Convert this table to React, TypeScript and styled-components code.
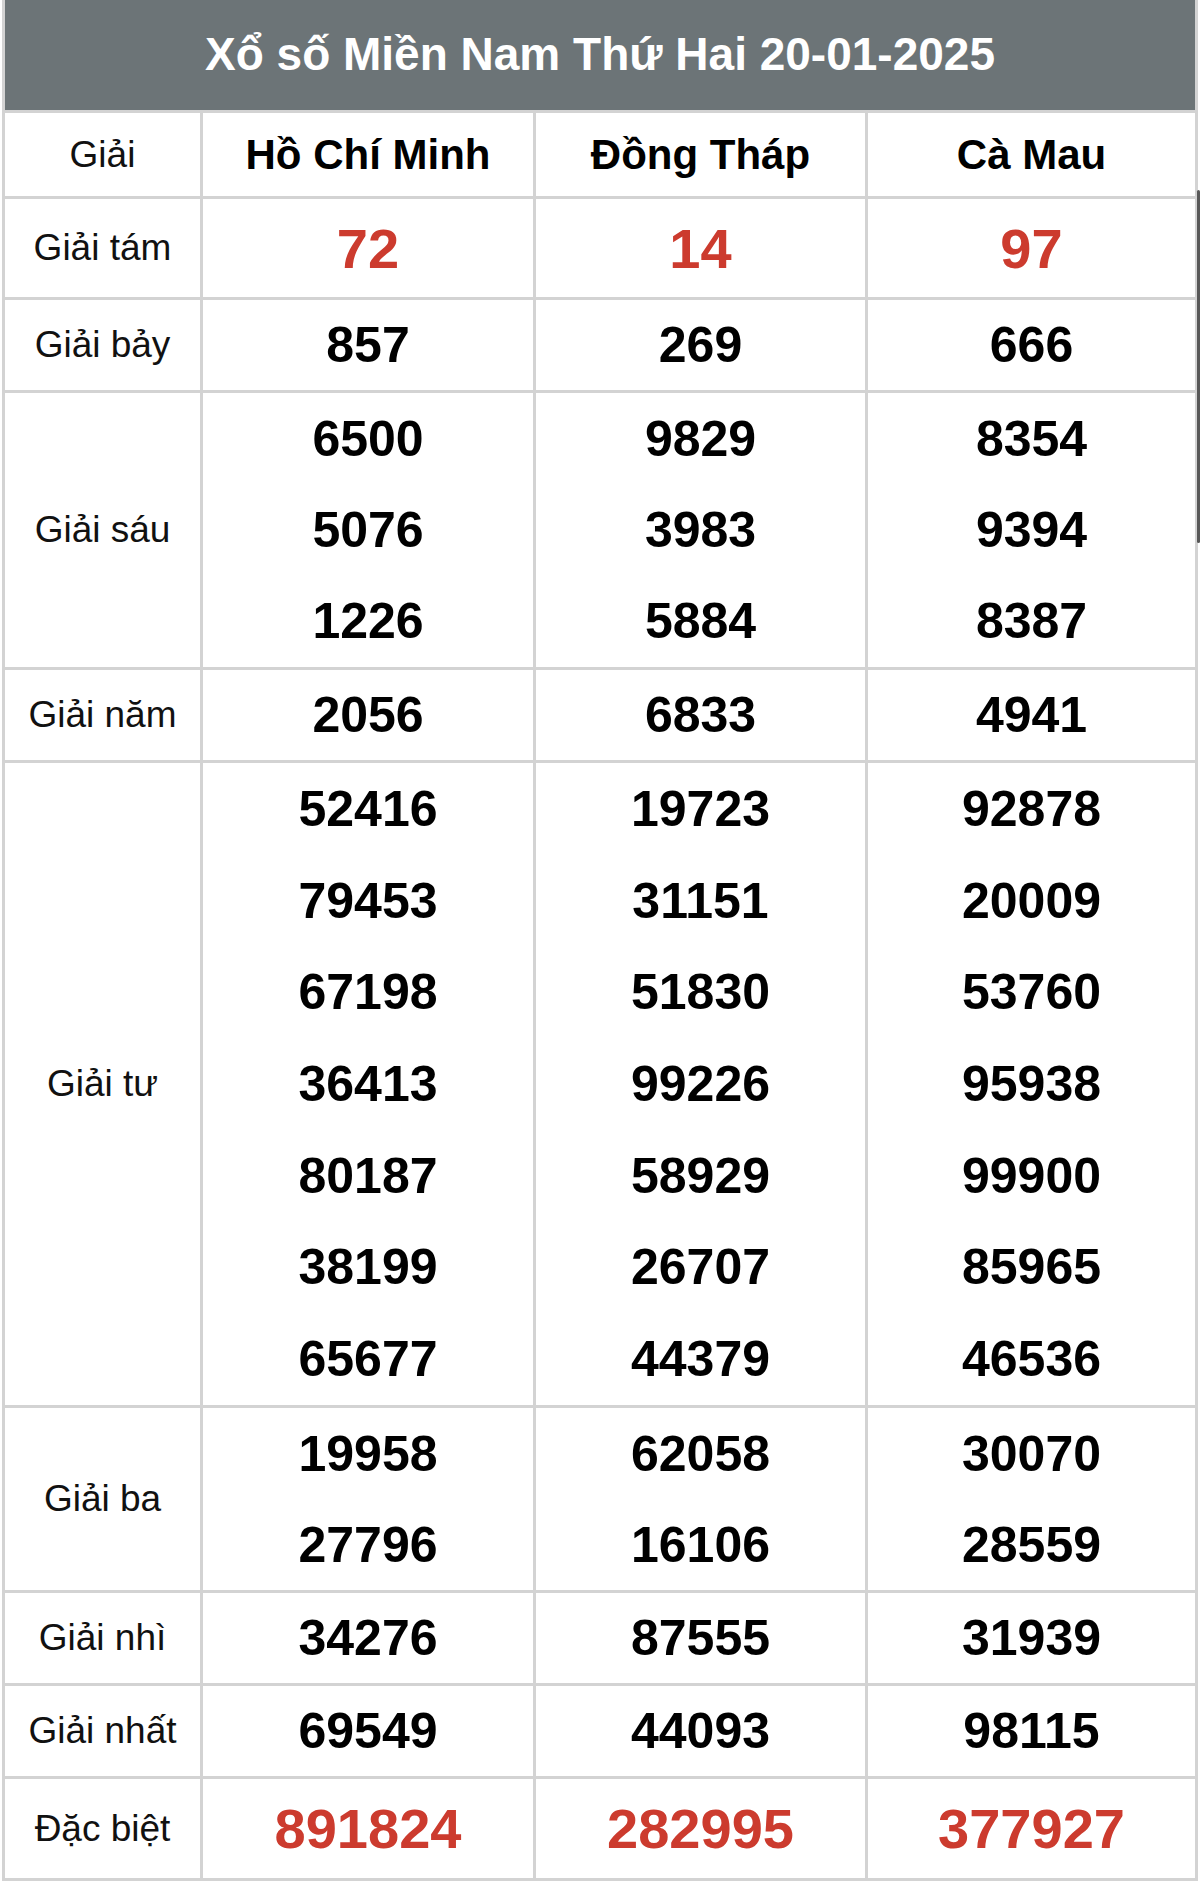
import React, { FC } from "react";
import styled, { createGlobalStyle } from "styled-components";

type PrizeRow = {
  label: string;
  height: number;
  highlight?: boolean;
  values: string[][];
};

const cities = ["Hồ Chí Minh", "Đồng Tháp", "Cà Mau"];

const rows: PrizeRow[] = [
  { label: "Giải tám", height: 98, highlight: true, values: [["72"], ["14"], ["97"]] },
  { label: "Giải bảy", height: 90, values: [["857"], ["269"], ["666"]] },
  {
    label: "Giải sáu",
    height: 274,
    values: [
      ["6500", "5076", "1226"],
      ["9829", "3983", "5884"],
      ["8354", "9394", "8387"],
    ],
  },
  { label: "Giải năm", height: 90, values: [["2056"], ["6833"], ["4941"]] },
  {
    label: "Giải tư",
    height: 642,
    values: [
      ["52416", "79453", "67198", "36413", "80187", "38199", "65677"],
      ["19723", "31151", "51830", "99226", "58929", "26707", "44379"],
      ["92878", "20009", "53760", "95938", "99900", "85965", "46536"],
    ],
  },
  {
    label: "Giải ba",
    height: 182,
    values: [
      ["19958", "27796"],
      ["62058", "16106"],
      ["30070", "28559"],
    ],
  },
  { label: "Giải nhì", height: 90, values: [["34276"], ["87555"], ["31939"]] },
  { label: "Giải nhất", height: 90, values: [["69549"], ["44093"], ["98115"]] },
  { label: "Đặc biệt", height: 99, highlight: true, values: [["891824"], ["282995"], ["377927"]] },
];

const GlobalStyle = createGlobalStyle`
  html, body {
    margin: 0;
    padding: 0;
    background: #ffffff;
  }
  body {
    font-family: "Liberation Sans", Arial, sans-serif;
  }
`;

const Page = styled.div`
  position: relative;
  width: 1200px;
  padding-left: 2px;
  box-sizing: border-box;
`;

const ResultGrid = styled.div`
  display: grid;
  grid-template-columns: 195px 330px 329px 327px;
  grid-auto-rows: auto;
  gap: 3px;
  width: 1196px;
  padding: 0 3px 3px;
  box-sizing: border-box;
  background: #d3d3d3;
`;

const TitleBar = styled.div`
  grid-column: 1 / -1;
  height: 110px;
  margin: 0 -3px;
  padding: 0 3px;
  display: flex;
  align-items: center;
  justify-content: center;
  background: #6c7477;
  border-left: 3px solid #d3d3d3;
  border-right: 3px solid #d3d3d3;
  color: #ffffff;
  font-size: 46px;
  font-weight: 700;
  padding-bottom: 2px;
  box-sizing: border-box;
`;

const Cell = styled.div<{ $h: number }>`
  height: ${(p) => p.$h}px;
  background: #ffffff;
  display: flex;
  flex-direction: column;
  align-items: center;
  justify-content: center;
`;

const LabelText = styled.span`
  font-size: 37px;
  color: #111111;
`;

const CityName = styled.span`
  font-size: 42px;
  font-weight: 700;
  color: #000000;
`;

const NumberLine = styled.div<{ $red?: boolean }>`
  flex: 1;
  display: flex;
  align-items: center;
  justify-content: center;
  font-size: ${(p) => (p.$red ? "56px" : "50px")};
  font-weight: 700;
  color: ${(p) => (p.$red ? "#cc3b2e" : "#000000")};
`;

const ScrollThumb = styled.div`
  position: absolute;
  top: 190px;
  right: 0;
  width: 3px;
  height: 353px;
  border-radius: 2px;
  background: #585858;
`;

const App: FC = () => {
  return (
    <>
      <GlobalStyle />
      <Page>
        <ResultGrid>
          <TitleBar>Xổ số Miền Nam Thứ Hai 20-01-2025</TitleBar>

          <Cell $h={83}>
            <LabelText>Giải</LabelText>
          </Cell>
          {cities.map((city) => (
            <Cell $h={83} key={city}>
              <CityName>{city}</CityName>
            </Cell>
          ))}

          {rows.map((row) => (
            <React.Fragment key={row.label}>
              <Cell $h={row.height}>
                <LabelText>{row.label}</LabelText>
              </Cell>
              {row.values.map((list, i) => (
                <Cell $h={row.height} key={i}>
                  {list.map((num, j) => (
                    <NumberLine $red={row.highlight} key={j}>
                      {num}
                    </NumberLine>
                  ))}
                </Cell>
              ))}
            </React.Fragment>
          ))}
        </ResultGrid>
        <ScrollThumb />
      </Page>
    </>
  );
};

export default App;
